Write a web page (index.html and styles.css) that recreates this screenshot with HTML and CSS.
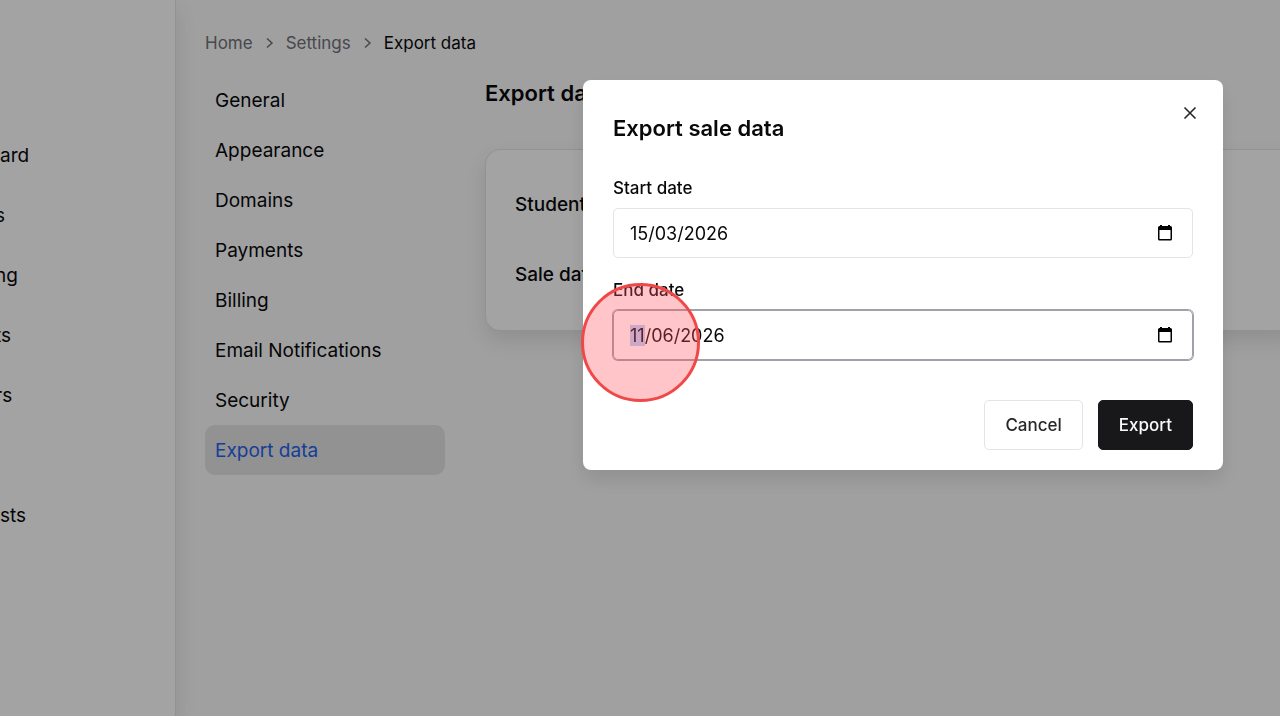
FILE: index.html
```
<!DOCTYPE html>
<html lang="en">
<head>
    <meta charset="UTF-8">
    <meta name="viewport" content="width=device-width, initial-scale=1.0">
    <title>Export data - Settings</title>
    <link rel="stylesheet" href="styles.css">
</head>
<body>
    <div class="page">
        <aside class="sidebar">
            <a href="#">ard</a>
            <a href="#" class="clipped">s</a>
            <a href="#" class="clipped">ng</a>
            <a href="#" class="clipped">ts</a>
            <a href="#" class="clipped">rs</a>
            <a href="#" class="new-group">sts</a>
        </aside>

        <main class="main">
            <nav class="breadcrumb">
                <a href="#">Home</a>
                <svg viewBox="0 0 8 12"><path d="M1.5 1.5 6.5 6l-5 4.5"/></svg>
                <a href="#">Settings</a>
                <svg viewBox="0 0 8 12"><path d="M1.5 1.5 6.5 6l-5 4.5"/></svg>
                <span class="current">Export data</span>
            </nav>

            <div class="columns">
                <nav class="settings-nav">
                    <a href="#">General</a>
                    <a href="#">Appearance</a>
                    <a href="#">Domains</a>
                    <a href="#">Payments</a>
                    <a href="#">Billing</a>
                    <a href="#">Email Notifications</a>
                    <a href="#">Security</a>
                    <a href="#" class="active">Export data</a>
                </nav>

                <section class="content">
                    <h1>Export data</h1>
                    <div class="card">
                        <p>Student data</p>
                        <p>Sale data</p>
                    </div>
                </section>
            </div>
        </main>
    </div>

    <div class="overlay">
        <div class="dialog" role="dialog" aria-labelledby="dialogTitle">
            <button class="close" type="button" aria-label="Close">
                <svg viewBox="0 0 14 14"><path d="M1.5 1.5l11 11M12.5 1.5l-11 11"/></svg>
            </button>
            <h2 id="dialogTitle">Export sale data</h2>
            <form>
                <div class="field">
                    <label for="startDate">Start date</label>
                    <div class="date-box">
                        <input type="text" id="startDate" value="15/03/2026">
                        <button type="button" class="picker" aria-label="Pick start date">
                            <svg viewBox="0 0 14 16"><path d="M2 0h2v1h6V0h2v1h.5A1.5 1.5 0 0 1 14 2.500v11.500a1.500 1.500 0 0 1-1.500 1.500h-11A1.500 1.500 0 0 1 0 14V2.500A1.500 1.500 0 0 1 1.500 1H2zM1.500 5v9h11V5z"/></svg>
                        </button>
                    </div>
                </div>
                <div class="field">
                    <label for="endDate">End date</label>
                    <div class="date-box focused">
                        <input type="text" id="endDate" value="11/06/2026">
                        <button type="button" class="picker" aria-label="Pick end date">
                            <svg viewBox="0 0 14 16"><path d="M2 0h2v1h6V0h2v1h.5A1.5 1.5 0 0 1 14 2.500v11.500a1.500 1.500 0 0 1-1.500 1.500h-11A1.500 1.500 0 0 1 0 14V2.500A1.500 1.500 0 0 1 1.500 1H2zM1.500 5v9h11V5z"/></svg>
                        </button>
                    </div>
                </div>
                <div class="actions">
                    <button type="button" class="btn">Cancel</button>
                    <button type="submit" class="btn primary">Export</button>
                </div>
            </form>
            <span class="click-marker"></span>
        </div>
    </div>

    <script>
        // start with the day part of the end date selected
        let endDate = document.getElementById("endDate");
        endDate.focus();
        endDate.setSelectionRange(0, 2);
    </script>
</body>
</html>
```
FILE: styles.css
```
* {
    box-sizing: border-box;
}
body {
    margin: 0;
    font-family: Inter, "Liberation Sans", sans-serif;
    font-size: 19px;
    color: #09090b;
    background: #fafafa;
    overflow: hidden;
}
a {
    color: inherit;
    text-decoration: none;
}
h1, h2, p {
    margin: 0;
}
button, input {
    font-family: inherit;
    color: inherit;
}

/* page behind the dialog */
.page {
    display: flex;
    min-height: 100vh;
}
.sidebar {
    display: flex;
    flex-direction: column;
    gap: 20px;
    width: 176px;
    padding-top: 136px;
    background: #fff;
    border-right: 1px solid #e4e4e7;
    box-shadow: 0 10px 20px rgba(0, 0, 0, 0.1);
}
.sidebar a {
    line-height: 40px;
}
.sidebar .clipped {
    margin-left: -5px;
}
.sidebar .new-group {
    margin-top: 60px;
}
.main {
    flex: 1;
    padding: 28px 0 0 29px;
}
.breadcrumb {
    display: flex;
    align-items: center;
    gap: 12px;
    height: 30px;
    font-size: 17px;
    color: #71717a;
}
.breadcrumb svg {
    width: 9px;
    height: 12px;
    fill: none;
    stroke: #71717a;
    stroke-width: 1.5;
}
.breadcrumb .current {
    color: #09090b;
}
.columns {
    display: flex;
    gap: 40px;
    padding-top: 17px;
}
.settings-nav {
    width: 240px;
}
.settings-nav a {
    display: block;
    padding: 2px 10px 0;
    line-height: 48px;
    border-radius: 10px;
}
.settings-nav .active {
    color: #2563eb;
    background: #e4e4e7;
}
.content {
    flex: 1;
    margin-right: -20px;
}
.content h1 {
    font-size: 22px;
    font-weight: 600;
    line-height: 36px;
}
.card {
    margin-top: 38px;
    padding: 20px 29px;
    background: #fff;
    border: 1px solid #e4e4e7;
    border-radius: 15px;
    box-shadow: 0 10px 20px rgba(0, 0, 0, 0.1);
}
.card p {
    font-weight: 500;
    line-height: 70px;
}

/* dialog */
.overlay {
    position: fixed;
    inset: 0;
    display: flex;
    justify-content: flex-end;
    align-items: flex-start;
    padding: 80px 57px;
    background: rgba(0, 0, 0, 0.36);
}
.dialog {
    position: relative;
    width: 640px;
    padding: 30px 30px 20px;
    background: #fff;
    border-radius: 8px;
    box-shadow: 0 10px 20px rgba(0, 0, 0, 0.1);
}
.dialog h2 {
    font-size: 22px;
    font-weight: 600;
    line-height: 36px;
}
.close {
    position: absolute;
    top: 20px;
    right: 20px;
    display: flex;
    padding: 6px;
    border: 0;
    background: none;
}
.close svg {
    width: 14px;
    height: 14px;
    stroke: #27272a;
    stroke-width: 1.6;
}
form {
    display: flex;
    flex-direction: column;
    gap: 22px;
    padding-top: 32px;
}
.field {
    display: flex;
    flex-direction: column;
    gap: 10px;
}
label {
    font-size: 17px;
    font-weight: 500;
    line-height: 20px;
}
.date-box {
    display: flex;
    align-items: center;
    height: 50px;
    padding: 0 20px 0 16px;
    border: 1px solid #e4e4e7;
    border-radius: 5px;
}
.focused {
    border-color: #a1a1aa;
    box-shadow: 0 0 0 1px #a1a1aa;
}
.date-box input {
    flex: 1;
    padding: 0;
    border: 0;
    outline: none;
    background: none;
    font-size: 18px;
}
.date-box input::selection {
    background: #b4d5fe;
    color: #09090b;
}
.picker {
    display: flex;
    padding: 0;
    border: 0;
    background: none;
}
.picker svg {
    width: 14px;
    height: 16px;
    fill: #000;
    fill-rule: evenodd;
}
.actions {
    display: flex;
    justify-content: flex-end;
    gap: 15px;
    padding-top: 18px;
}
.btn {
    height: 50px;
    padding: 0 20px;
    border: 1px solid #e4e4e7;
    border-radius: 5px;
    background: #fff;
    font-size: 17px;
    font-weight: 500;
    color: #27272a;
}
.primary {
    border-color: #18181b;
    background: #18181b;
    color: #fafafa;
}
.click-marker {
    position: absolute;
    left: -2px;
    top: 203px;
    width: 119px;
    height: 119px;
    border: 3px solid #f04848;
    border-radius: 50%;
    background: rgba(255, 80, 90, 0.33);
    pointer-events: none;
}
```
